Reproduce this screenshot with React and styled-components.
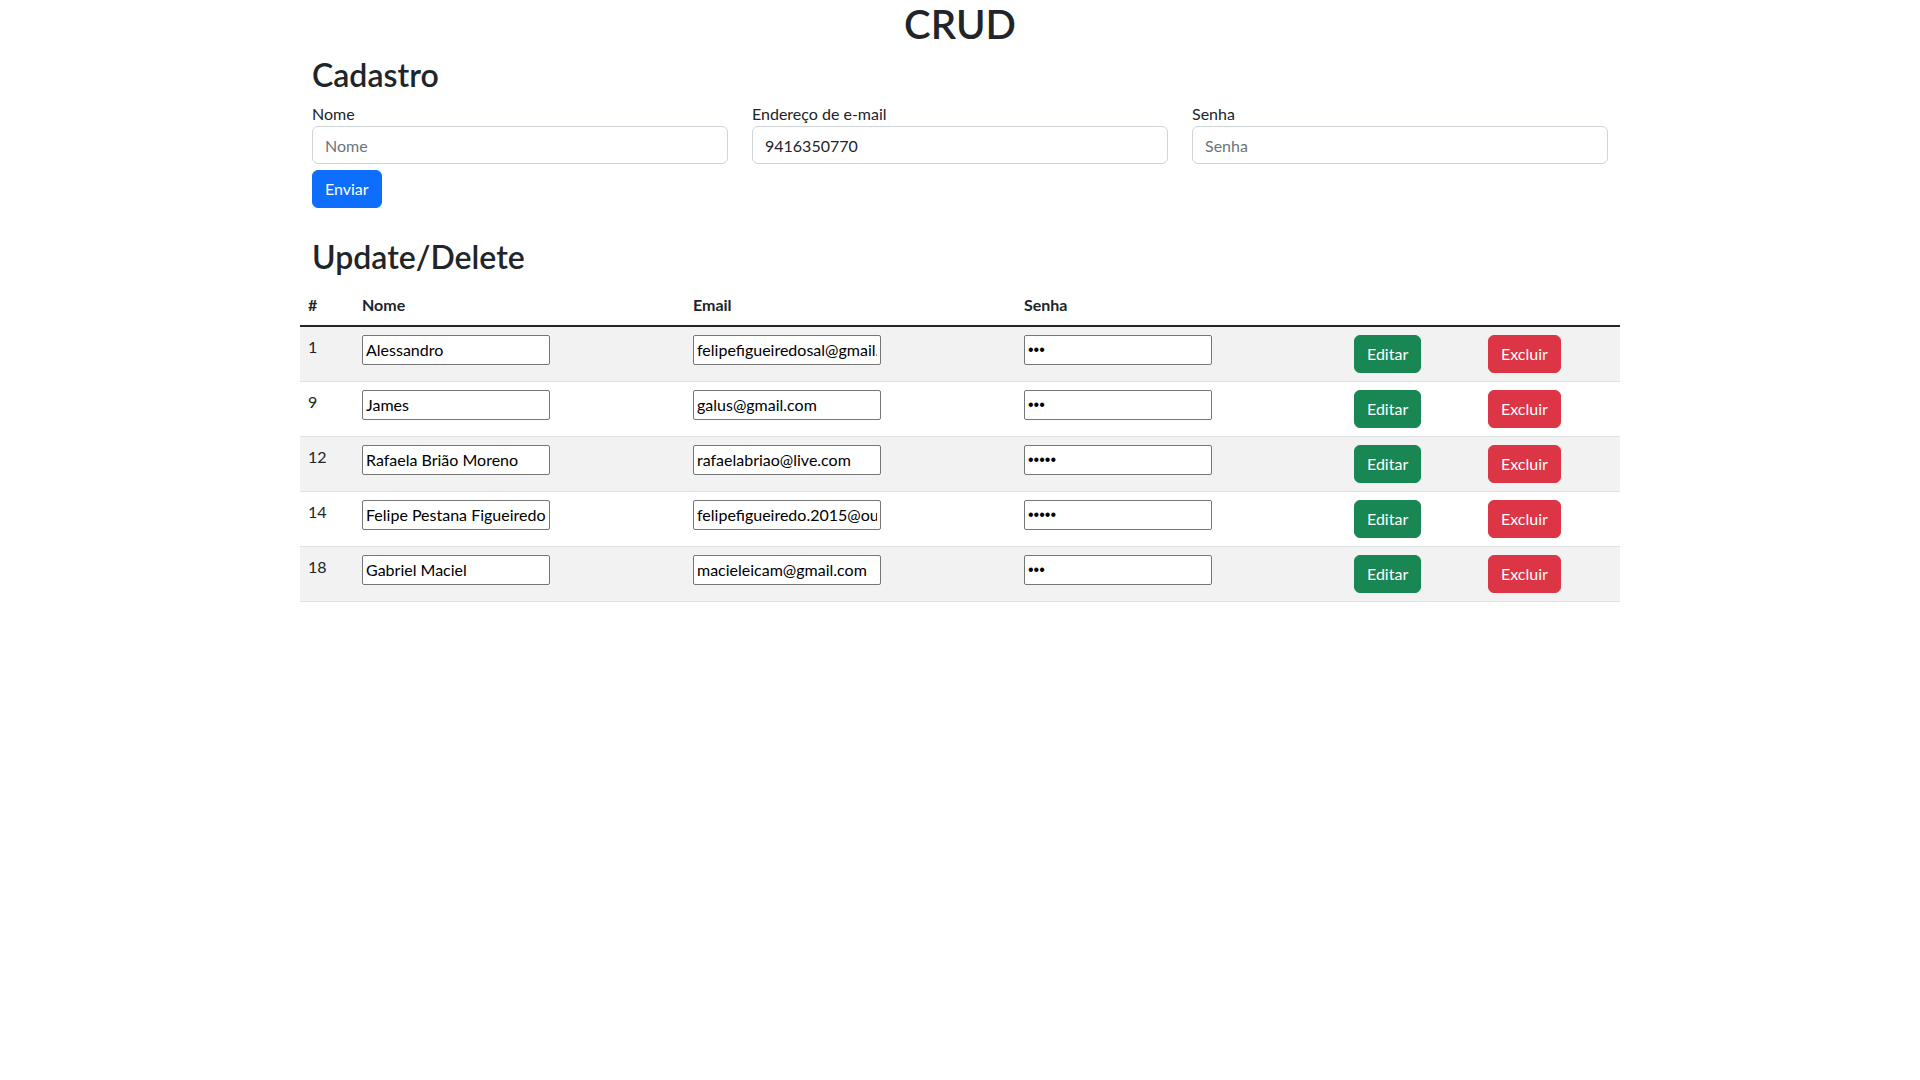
import React from "react";
import styled, { createGlobalStyle } from "styled-components";

// users listed in the update/delete table
const users = [
  { id: 1, nome: "Alessandro", email: "felipefigueiredosal@gmail.com", senha: "abc" },
  { id: 9, nome: "James", email: "galus@gmail.com", senha: "abc" },
  { id: 12, nome: "Rafaela Brião Moreno", email: "rafaelabriao@live.com", senha: "abcde" },
  { id: 14, nome: "Felipe Pestana Figueiredo", email: "felipefigueiredo.2015@outlook.com", senha: "abcde" },
  { id: 18, nome: "Gabriel Maciel", email: "macieleicam@gmail.com", senha: "abc" },
];

const columns = [54, 331, 331, 330, 134, 140];

const GlobalStyle = createGlobalStyle`
  * {
    box-sizing: border-box;
  }
  body {
    margin: 0;
    background: #fff;
    color: #212529;
    font-family: Lato, "Segoe UI", "Liberation Sans", sans-serif;
    font-size: 16px;
    line-height: 1.5;
  }
`;

const Page = styled.div`
  min-height: 100vh;
  background: #fff;
`;

const Title = styled.h1`
  margin: 0 0 8px;
  font-size: 40px;
  font-weight: 600;
  line-height: 1.2;
  text-align: center;
`;

const Container = styled.div`
  width: 1320px;
  margin: 0 auto;
`;

const Section = styled.section`
  padding: 0 12px;
  margin-top: ${(p) => p.$top || 0}px;
`;

const SectionTitle = styled.h2`
  margin: 0 0 8px;
  font-size: 32px;
  font-weight: 600;
  line-height: 1.2;
`;

const FormRow = styled.div`
  display: grid;
  grid-template-columns: repeat(3, 1fr);
  column-gap: 24px;
`;

const Field = styled.div`
  display: flex;
  flex-direction: column;
`;

const Label = styled.label`
  font-size: 16px;
  line-height: 24px;
`;

const FormInput = styled.input`
  height: 38px;
  width: 100%;
  padding: 6px 12px;
  font-family: inherit;
  font-size: 16px;
  line-height: 24px;
  color: #212529;
  background: #fff;
  border: 1px solid #ced4da;
  border-radius: 6px;
  outline: none;

  &::placeholder {
    color: #6c757d;
  }
`;

const variants = {
  primary: "#0d6efd",
  success: "#198754",
  danger: "#dc3545",
};

const Button = styled.button`
  height: 38px;
  padding: 6px 12px;
  font-family: inherit;
  font-size: 16px;
  line-height: 24px;
  color: #fff;
  background: ${(p) => variants[p.$variant]};
  border: 1px solid ${(p) => variants[p.$variant]};
  border-radius: 6px;
  cursor: pointer;
`;

const SubmitButton = styled(Button)`
  margin-top: 6px;
`;

const Table = styled.table`
  width: 1320px;
  border-collapse: collapse;
  table-layout: fixed;
  vertical-align: top;
`;

const HeadCell = styled.th`
  padding: 8px;
  text-align: left;
  font-weight: 700;
  line-height: 24px;
  border-bottom: 2px solid #212529;
`;

const Row = styled.tr`
  background: ${(p) => (p.$striped ? "#f2f2f2" : "#fff")};
`;

const Cell = styled.td`
  padding: 8px;
  line-height: 24px;
  vertical-align: top;
  border-bottom: 1px solid #dee2e6;
`;

const CellInput = styled.input`
  width: 188px;
  height: 30px;
  padding: 2px 3px;
  font-family: ${(p) => (p.type === "password" ? '"Liberation Sans", sans-serif' : "inherit")};
  font-size: 16px;
  line-height: 24px;
  color: #000;
  background: #fff;
  border: 1px solid #767676;
  border-radius: 2px;
  outline: none;
`;

const App = () => {
  return (
    <Page>
      <GlobalStyle />
      <Title>CRUD</Title>
      <Container>
        <Section>
          <SectionTitle>Cadastro</SectionTitle>
          <FormRow>
            <Field>
              <Label>Nome</Label>
              <FormInput placeholder="Nome" />
            </Field>
            <Field>
              <Label>Endereço de e-mail</Label>
              <FormInput defaultValue="9416350770" />
            </Field>
            <Field>
              <Label>Senha</Label>
              <FormInput type="password" placeholder="Senha" />
            </Field>
          </FormRow>
          <SubmitButton $variant="primary">Enviar</SubmitButton>
        </Section>

        <Section $top={30}>
          <SectionTitle>Update/Delete</SectionTitle>
        </Section>

        <Table>
          <colgroup>
            {columns.map((w, i) => (
              <col key={i} style={{ width: w }} />
            ))}
          </colgroup>
          <thead>
            <tr>
              <HeadCell>#</HeadCell>
              <HeadCell>Nome</HeadCell>
              <HeadCell>Email</HeadCell>
              <HeadCell>Senha</HeadCell>
              <HeadCell></HeadCell>
              <HeadCell></HeadCell>
            </tr>
          </thead>
          <tbody>
            {users.map((u, i) => (
              <Row key={u.id} $striped={i % 2 === 0}>
                <Cell>{u.id}</Cell>
                <Cell>
                  <CellInput defaultValue={u.nome} />
                </Cell>
                <Cell>
                  <CellInput defaultValue={u.email} />
                </Cell>
                <Cell>
                  <CellInput type="password" defaultValue={u.senha} />
                </Cell>
                <Cell>
                  <Button $variant="success">Editar</Button>
                </Cell>
                <Cell>
                  <Button $variant="danger">Excluir</Button>
                </Cell>
              </Row>
            ))}
          </tbody>
        </Table>
      </Container>
    </Page>
  );
};

export default App;
